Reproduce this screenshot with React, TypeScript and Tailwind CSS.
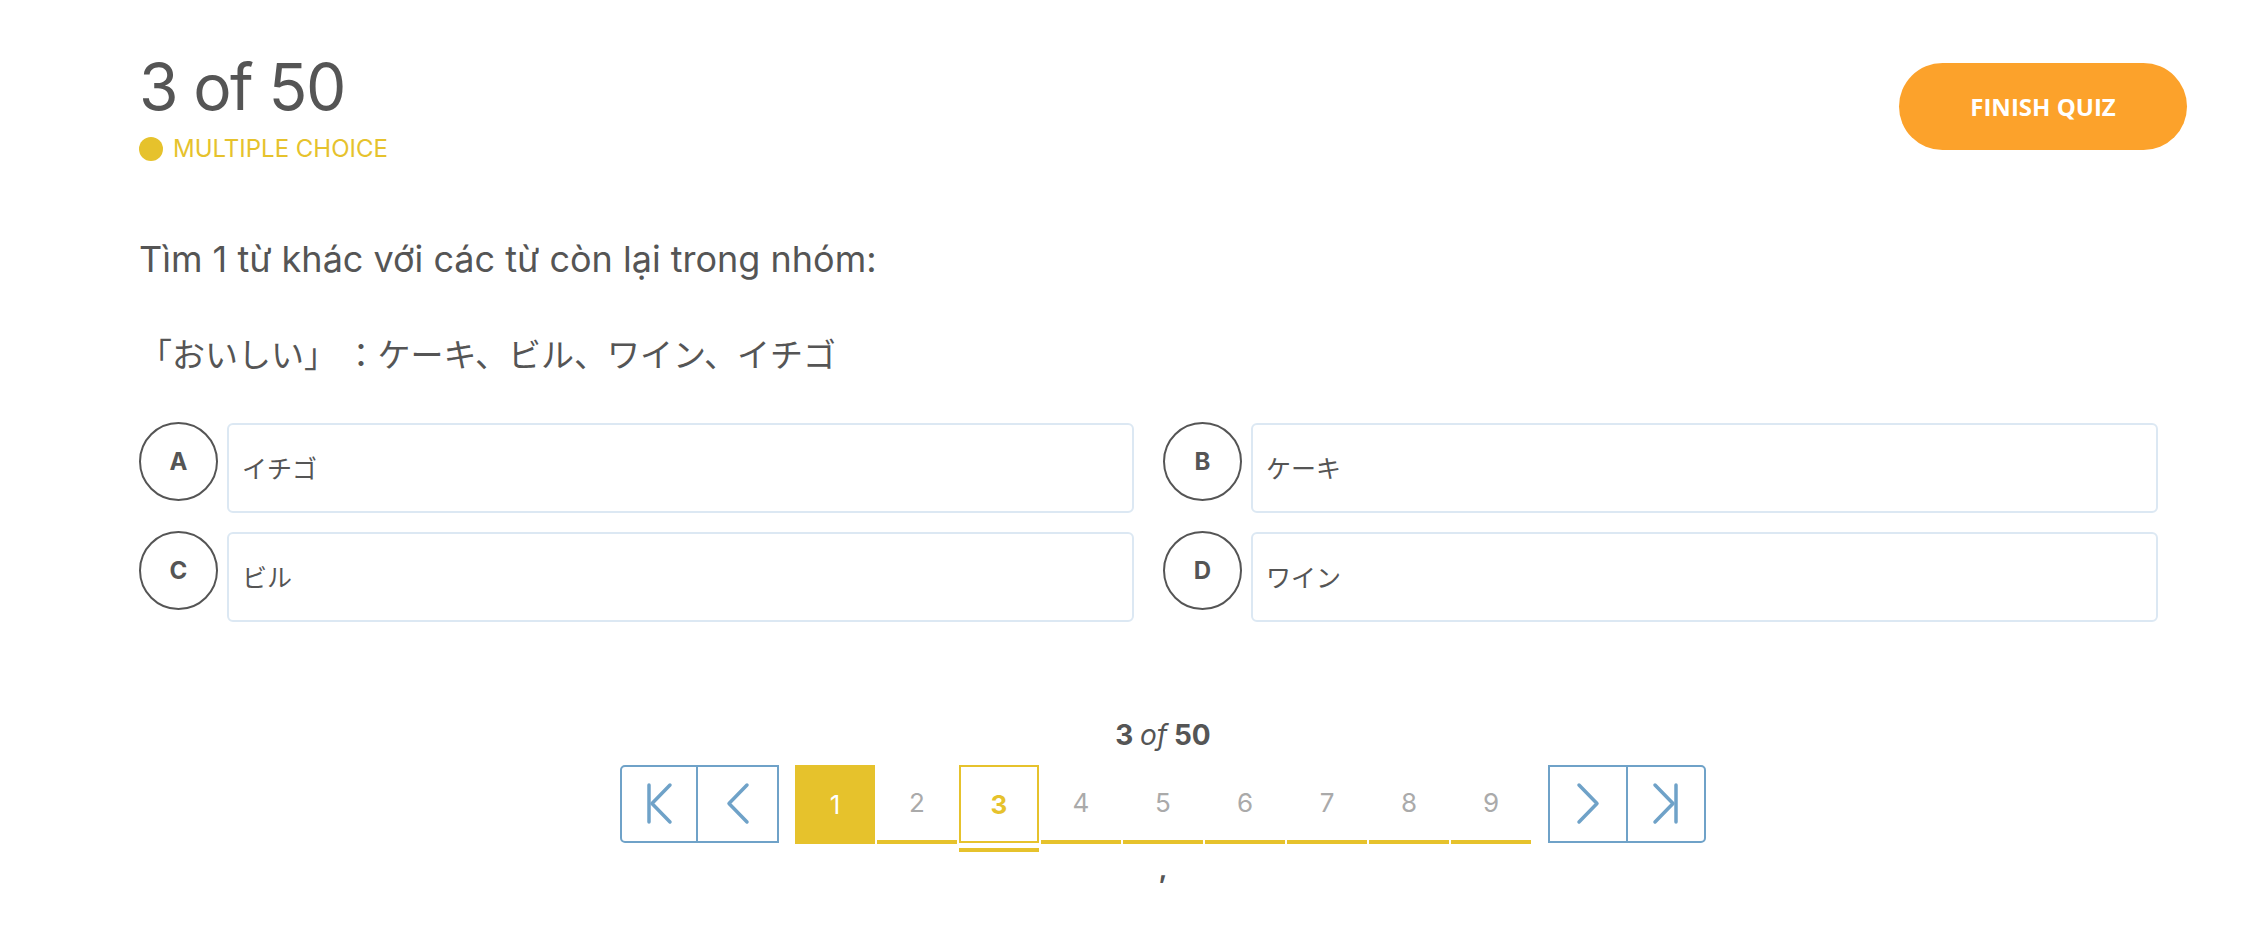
import React from "react";

const options = [
  { key: "A", text: "イチゴ" },
  { key: "B", text: "ケーキ" },
  { key: "C", text: "ビル" },
  { key: "D", text: "ワイン" },
];

const pages = [1, 2, 3, 4, 5, 6, 7, 8, 9];
const current = 3;
const answered = 1;

function NavIcon({ kind }: { kind: "first" | "prev" | "next" | "last" }) {
  return (
    <svg width="40" height="44" viewBox="0 0 40 44" fill="none" stroke="#6fa2c8" strokeWidth={3.5} strokeLinecap="round" strokeLinejoin="round" aria-hidden="true">
      {kind === "first" && (
        <>
          <path d="M10 3v37" />
          <path d="M31 3L13 21.5 31 40" />
        </>
      )}
      {kind === "prev" && <path d="M29 3L11 21.5 29 40" />}
      {kind === "next" && <path d="M11 3L29 21.5 11 40" />}
      {kind === "last" && (
        <>
          <path d="M30 3v37" />
          <path d="M9 3L27 21.5 9 40" />
        </>
      )}
    </svg>
  );
}

export default function App() {
  return (
    <div className="min-h-[933px] w-full bg-white text-[#555] font-['Inter','Noto_Sans_CJK_JP',sans-serif]">
      <div className="ml-[139px] w-[2048px]">
        {/* Header */}
        <div className="flex items-start justify-between pt-[55px]">
          <div>
            <h1 className="text-[64px] leading-[64px] font-normal tracking-tight text-[#555]">3 of 50</h1>
            <div className="mt-[18px] flex items-center gap-[10px]">
              <span className="w-6 h-6 rounded-full bg-[#e6c22c]" />
              <span className="text-[24px] leading-[24px] text-[#e6c22c] uppercase">Multiple Choice</span>
            </div>
          </div>
          <button className="mt-[8px] w-[288px] h-[87px] rounded-full bg-[#fca22b] text-white text-[24px] font-bold font-['Open_Sans',sans-serif]">
            FINISH QUIZ
          </button>
        </div>

        {/* Question */}
        <p className="mt-[80px] text-[36px] leading-[36px]">Tìm 1 từ khác với các từ còn lại trong nhóm:</p>
        <p className="mt-[60px] text-[33px] leading-[33px] [text-spacing-trim:space-all] font-['Noto_Sans_CJK_JP',sans-serif]">
          「おいしい」 ：ケーキ、ビル、ワイン、イチゴ
        </p>

        {/* Options */}
        <div className="mt-[52px] grid grid-cols-2 gap-y-[18px]">
          {options.map((o) => (
            <div key={o.key} className="flex items-start gap-[9px] pr-[29px]">
              <div className="w-[79px] h-[79px] shrink-0 rounded-full border-2 border-[#555] flex items-center justify-center text-[24px] font-bold">
                {o.key}
              </div>
              <div className="flex-1 h-[90px] mt-[1px] rounded-md border-2 border-[#dce8f3] flex items-center px-[13px] text-[25px] font-['Noto_Sans_CJK_JP',sans-serif]">
                {o.text}
              </div>
            </div>
          ))}
        </div>

        {/* Pagination */}
        <div className="mt-[99px] flex flex-col items-center">
          <div className="text-[28px] leading-[28px] font-bold">
            3 <span className="italic font-normal">of</span> 50
          </div>
          <div className="mt-[16px] flex items-start">
            <div className="flex h-[78px] border-2 border-[#6fa2c8] rounded-[5px] rounded-r-none">
              <button className="w-[76px] flex items-center justify-center border-r-2 border-[#6fa2c8]">
                <NavIcon kind="first" />
              </button>
              <button className="w-[79px] flex items-center justify-center">
                <NavIcon kind="prev" />
              </button>
            </div>
            <div className="ml-[16px] flex gap-[2px]">
              {pages.map((p) => (
                <div key={p} className="w-[80px] flex flex-col">
                  {p === answered ? (
                    <div className="h-[79px] bg-[#e6c22c] text-white flex items-center justify-center text-[26px]">{p}</div>
                  ) : p === current ? (
                    <>
                      <div className="h-[78px] border-2 border-[#e6c22c] text-[#e6c22c] font-bold flex items-center justify-center text-[26px]">{p}</div>
                      <div className="mt-[5px] h-[4px] bg-[#e6c22c]" />
                    </>
                  ) : (
                    <div className="h-[79px] border-b-4 border-[#e6c22c] text-[#aaa] flex items-center justify-center text-[26px]">{p}</div>
                  )}
                </div>
              ))}
            </div>
            <div className="ml-[17px] flex h-[78px] border-2 border-[#6fa2c8] rounded-[5px] rounded-l-none">
              <button className="w-[78px] flex items-center justify-center border-r-2 border-[#6fa2c8]">
                <NavIcon kind="next" />
              </button>
              <button className="w-[76px] flex items-center justify-center">
                <NavIcon kind="last" />
              </button>
            </div>
          </div>
          <div className="mt-[4px] text-[26px] leading-[26px] font-bold">,</div>
        </div>
      </div>
    </div>
  );
}
